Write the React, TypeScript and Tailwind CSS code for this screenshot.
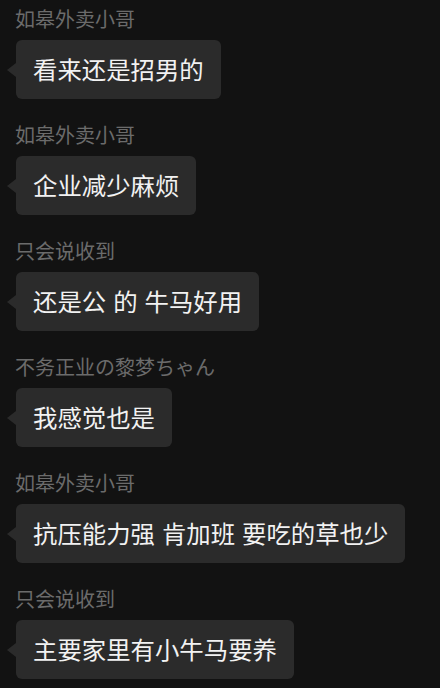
const messages = [
  { name: '如皋外卖小哥', text: '看来还是招男的' },
  { name: '如皋外卖小哥', text: '企业减少麻烦' },
  { name: '只会说收到', text: '还是公 的 牛马好用' },
  { name: '不务正业の黎梦ちゃん', text: '我感觉也是' },
  { name: '如皋外卖小哥', text: '抗压能力强 肯加班 要吃的草也少' },
  { name: '只会说收到', text: '主要家里有小牛马要养' }
]

const font = { fontFamily: '"Noto Sans CJK SC", "Noto Sans", sans-serif' }

export default function App() {
  return (
    <div className="w-[440px] h-[688px] overflow-hidden bg-[#121212] pt-[6px]" style={font}>
      {messages.map((m, i) => (
        <div key={i} className="mb-[23px]">
          <div className="h-[26px] pl-[15px] text-[20px] leading-[26px] text-[#6b6b6b] whitespace-pre">{m.name}</div>
          <div className="mt-[8px] flex items-center pl-[7px]">
            {/* bubble tail */}
            <div className="w-0 h-0 border-y-[7px] border-y-transparent border-r-[9px] border-r-[#2b2b2b]" />
            <div className="h-[59px] flex items-center rounded-[6px] bg-[#2b2b2b] px-[17px] text-[24.4px] leading-none text-[#f2f2f2] whitespace-pre [word-spacing:1.5px]">
              {m.text}
            </div>
          </div>
        </div>
      ))}
    </div>
  )
}
